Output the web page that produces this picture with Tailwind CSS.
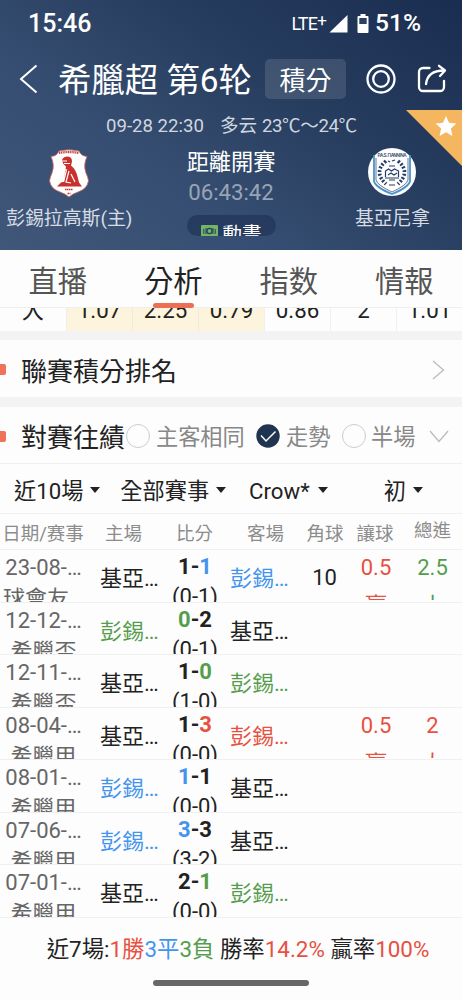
<!DOCTYPE html>
<html lang="zh-Hant">
<head>
    <meta charset="UTF-8">
    <meta name="viewport" content="width=device-width, initial-scale=1.0">
    <title>希臘超 第6轮</title>
    <script src="https://cdn.jsdelivr.net/npm/@tailwindcss/browser@4"></script>
</head>
<body class="w-[462px] h-[1000px] overflow-hidden bg-[#fdfdfd] text-[#222] font-[Roboto,'Noto_Sans_CJK_SC',sans-serif] whitespace-nowrap">
    <!-- Match header -->
    <header class="relative h-[250px] overflow-hidden bg-linear-[35deg,#40577a_0%,#354d70_35%,#263c5e_65%,#192d50_100%] text-white">
        <!-- Status bar -->
        <div class="flex h-[47px] items-center pl-[28px] pr-[41px] leading-none">
            <span class="text-[25px] font-medium">15:46</span>
            <span class="ml-auto text-[18px] tracking-[-0.8px]">LTE<sup class="text-[17px] top-[-4px]">+</sup></span>
            <svg class="ml-[3px]" width="19" height="18" viewBox="0 0 19 18" fill="#fff"><path d="M0.5 17.5L18.5 0v17.5z"/></svg>
            <svg class="ml-[9px]" width="12" height="19" viewBox="0 0 12 19"><path d="M3.5 0h5v2h2a1 1 0 0 1 1 1v15a1 1 0 0 1-1 1h-9a1 1 0 0 1-1-1V3a1 1 0 0 1 1-1h2z" fill="#fff"/><path d="M2.3 4h7.4v6H2.3z" fill="#2b4163"/></svg>
            <span class="ml-[6px] text-[24.5px] font-medium">51%</span>
        </div>
        <!-- Title row -->
        <div class="flex h-[64px] items-center pl-[19px] leading-none">
            <svg width="19" height="30" viewBox="0 0 19 30" fill="none" stroke="#fff" stroke-width="2"><path d="M17.5 1.5L2 15l15.500 13.500"/></svg>
            <h1 class="ml-[20px] w-[207px] pt-[3px] text-[33.4px]">希臘超 第6轮</h1>
            <button class="h-[40px] w-[81px] rounded-[5px] bg-white/12 pt-[3px] text-[26px] leading-none">積分</button>
            <svg class="ml-[20px]" width="30" height="30" viewBox="0 0 30 30" fill="none" stroke="#fff" stroke-width="2.300"><circle cx="15" cy="15" r="13.500"/><circle cx="15" cy="15" r="7.800"/></svg>
            <svg class="ml-[21px]" width="31" height="30" viewBox="0 0 31 30" fill="none" stroke="#fff" stroke-width="2.300" stroke-linecap="round" stroke-linejoin="round"><path d="M12.500 4H6a4 4 0 0 0-4 4v15a4 4 0 0 0 4 4h17a4 4 0 0 0 4-4v-6"/><path d="M9 20C10 11.500 16 6.500 27 6.500M22 1.800l6 4.700-5 5.500"/></svg>
        </div>
        <div class="flex h-[28px] items-center pl-[106px] pt-[2px] text-[18.6px] leading-none text-[#d0d6df]">
            <span class="w-[114px]">09-28 22:30</span>
            <span class="w-[42px]">多云</span>
            <span class="tracking-[-0.4px]">23℃～24℃</span>
        </div>
        <!-- Teams and countdown -->
        <div class="flex h-[98px]">
            <div class="flex w-[186px] flex-col pl-[6px] pt-[10px]">
                <svg class="ml-[43px]" width="40" height="49" viewBox="0 0 40 49">
                    <path d="M10 2Q20-.5 30 2q2 5 8 5.500Q34 16 37 24q2 4 2.500 8Q38 40 29 43q-6 2-9 5-3-3-9-5Q2 40 .5 32 1 28 3 24 6 16 2 7.500 8 7 10 2z" fill="#fff" stroke="#c9625f" stroke-width=".8"/>
                    <path d="M10 4q10-2 20 0" fill="none" stroke="#c34a48" stroke-width="2.400" stroke-dasharray="1.200 .6"/>
                    <path d="M13 12q0-4 5-4.500 5 0 5 5l-1 4q5 4 6.500 11l1.500 6 3 4H8l4-4 3-1 1-9 1-6q-3-2-4-5.500z" fill="#c9302c"/>
                    <path d="M14 20l3.500 1-3 12M20 22l-3 11 5 1M22 25l4 8M13 12h5M15 14.500h6" fill="none" stroke="#fff" stroke-width="1.200"/>
                    <path d="M16 40.500h8M18.500 44.500h3" stroke="#c9302c" stroke-width="1.600" stroke-dasharray="1.500 .5"/>
                </svg>
                <span class="mt-[12px] text-[18.9px] leading-none text-[#d7dce4]">彭錫拉高斯(主)</span>
            </div>
            <div class="flex w-[90px] flex-col items-center pt-[12px] leading-none">
                <span class="text-[22.200px]">距離開賽</span>
                <span class="mt-[8px] text-[22.200px] text-[#99a4b5]">06:43:42</span>
                <div class="mt-[12px] flex h-[21px] w-[89px] overflow-hidden rounded-[11px] bg-[#22365a]/75 pl-[14px]">
                    <svg class="mt-[10px] shrink-0" width="17" height="11" viewBox="0 0 17 11"><rect width="17" height="12" rx="1" fill="#72b566"/><circle cx="8.500" cy="6" r="2.600" fill="none" stroke="#28405f" stroke-width="1.400"/><path d="M2.800 4v5M14.200 4v5M5 3v6M12 3v6" stroke="#28405f"/></svg>
                    <span class="ml-[5px] mt-[10px] text-[19.500px] leading-none">動畫</span>
                </div>
            </div>
            <div class="flex grow flex-col items-center pt-[9px] pl-[47px]">
                <svg class="mr-[1px]" width="48" height="48" viewBox="0 0 48 48">
                    <circle cx="24" cy="24" r="24" fill="#fdfdfd"/>
                    <path d="M6 7v26q1 6 18 13 17-7 18-13V7" fill="none" stroke="#4c93c7" stroke-width="1.800"/>
                    <path d="M8 10v22q1 5 16 12 15-7 16-12V10" fill="none" stroke="#243c68" stroke-width=".7"/>
                    <text x="24" y="9" text-anchor="middle" font-size="5" font-weight="500" fill="#33486f" textLength="29">P.A.S. ΓIANNINA</text>
                    <path d="M18 13Q5 24 18 36M30 13q13 11 0 23" fill="none" stroke="#243c68" stroke-width="3.600" stroke-dasharray="2 1.700"/>
                    <path d="M20 13l2 1M24 13l3-1M21 18h6M17.500 29v-6l3-2 3 2 3-2 4 2v6M17 30h14M20 27l3-2 3 2 3-2M21 32h6M21 37h6" fill="none" stroke="#243c68" stroke-width="1.200"/>
                </svg>
                <span class="mt-[14px] text-[18.8px] leading-none text-[#d7dce4]">基亞尼拿</span>
            </div>
        </div>
        <!-- Favourite corner -->
        <svg class="absolute top-[110px] right-0" width="56" height="56" viewBox="0 0 56 56"><path d="M0 0h56v56z" fill="#f4b65f"/><path d="M40 6l3 6.800 7.400.8-5.500 5 1.500 7.300L40 22.200 33.600 25.900l1.500-7.300-5.500-5 7.400-.8z" fill="#fff"/></svg>
    </header>

    <!-- Tabs -->
    <nav class="relative z-10 grid h-[58px] grid-cols-4 border-b border-[#eee] bg-[#fdfdfd] text-center text-[29.300px] leading-[65px] text-[#555]">
        <span>直播</span>
        <span class="relative text-[#222]">分析<i class="absolute top-[53px] left-[37px] h-[5px] w-[41px] rounded-full bg-[#ea6f54]"></i></span>
        <span>指数</span>
        <span>情報</span>
    </nav>

    <!-- Odds row, scrolled under the tabs -->
    <div class="grid h-[23px] grid-cols-7 overflow-hidden text-center text-[22.300px] leading-[5px]">
        <span>大</span>
        <span class="h-full border-l border-[#f0eee6] bg-[#fdf4dd]">1.07</span>
        <span class="h-full border-l border-[#efeadd] bg-[#fdf4dd]">2.25</span>
        <span class="h-full border-l border-[#efeadd] bg-[#fdf4dd]">0.79</span>
        <span class="h-full border-l border-[#f0f0f0]">0.86</span>
        <span class="h-full border-l border-[#f0f0f0]">2</span>
        <span class="h-full border-l border-[#f0f0f0]">1.01</span>
    </div>

    <section class="flex h-[66px] items-center border-t-[9px] border-[#f3f3f3] pt-[2px]">
        <i class="h-[11px] w-[6px] rounded-r-[2px] bg-[#ee7358]"></i>
        <h2 class="ml-[15px] pt-[4px] text-[26px] leading-none">聯賽積分排名</h2>
        <svg class="ml-auto mr-[17px]" width="13" height="20" viewBox="0 0 13 20" fill="none" stroke="#bbb" stroke-width="1.300"><path d="M1 1l10.500 9L1 19"/></svg>
    </section>

    <section class="flex h-[67px] items-center border-t-[10px] border-b border-t-[#f3f3f3] border-b-[#f0f0f0] pt-[2px] text-[22.200px] leading-none text-[#888]">
        <i class="h-[11px] w-[6px] rounded-r-[2px] bg-[#ee7358]"></i>
        <h2 class="ml-[15px] w-[105px] pt-[3px] text-[26px] leading-none text-[#222]">對賽往績</h2>
        <i class="h-[24px] w-[24px] shrink-0 rounded-full border border-[#ccc]"></i>
        <span class="ml-[6px] w-[100px] pt-[3px]">主客相同</span>
        <svg class="shrink-0" width="24" height="24" viewBox="0 0 24 24"><circle cx="12" cy="12" r="11.700" fill="#1f3450"/><path d="M5 11.500l5 5.500 9.500-9.500" fill="none" stroke="#fff" stroke-width="1.500"/></svg>
        <span class="ml-[6px] w-[56px] pt-[3px]">走勢</span>
        <i class="h-[24px] w-[24px] shrink-0 rounded-full border border-[#ccc]"></i>
        <span class="ml-[5px] w-[58px] pt-[3px]">半場</span>
        <svg class="shrink-0" width="20" height="13" viewBox="0 0 20 13" fill="none" stroke="#bbb" stroke-width="1.300"><path d="M1 1l9 10.500L19 1"/></svg>
    </section>

    <!-- Filters -->
    <div class="flex h-[50px] items-center border-b border-[#f0f0f0] pl-[14px] pt-[3px] text-[22.200px] leading-none">
        <span class="pt-[2px]">近10場</span>
        <svg class="ml-[7px]" width="10" height="6" viewBox="0 0 10 6"><path d="M0 0h10L5 6z" fill="#222"/></svg>
        <span class="ml-[20px] pt-[2px]">全部賽事</span>
        <svg class="ml-[7px]" width="10" height="6" viewBox="0 0 10 6"><path d="M0 0h10L5 6z" fill="#222"/></svg>
        <span class="ml-[23px] pt-[2px]">Crow*</span>
        <svg class="ml-[8px]" width="10" height="6" viewBox="0 0 10 6"><path d="M0 0h10L5 6z" fill="#222"/></svg>
        <span class="ml-[56px] pt-[2px]">初</span>
        <svg class="ml-[7px]" width="10" height="6" viewBox="0 0 10 6"><path d="M0 0h10L5 6z" fill="#222"/></svg>
    </div>

    <!-- Head to head table -->
    <div class="grid h-[36px] grid-cols-[86px_75px_67px_75px_44px_56px_59px] border-b border-[#f0f0f0] text-center text-[18.500px] leading-[40px] text-[#8c8c8c]">
        <span>日期/赛事</span>
        <span>主場</span>
        <span>比分</span>
        <span>客場</span>
        <span>角球</span>
        <span>讓球</span>
        <span class="leading-[34px]">總進</span>
    </div>
    <div id="matches"></div>

    <!-- Summary -->
    <footer class="flex flex-col items-center">
        <p class="mt-[19px] pl-[14px] text-[22.400px] leading-[24px]">近7場:<span class="text-[#e8503f]">1勝</span><span class="text-[#4394ee]">3平</span><span class="text-[#559d4c]">3負</span> 勝率<span class="text-[#e8503f]">14.2%</span> 贏率<span class="text-[#e8503f]">100%</span></p>
        <i class="mt-[19px] h-[6px] w-[156px] rounded-full bg-[#686868]"></i>
    </footer>

    <script>
        const colors = {
            k: 'text-[#222]',
            r: 'text-[#e8503f]',
            g: 'text-[#559d4c]',
            b: 'text-[#4394ee]'
        };

        // date, league, home, home colour, score, half time, away, away colour, corners, handicap, total
        const matches = [
            ['23-08-…', '球會友', '基亞…', 'k', [1, 1], '(0-1)', '彭錫…', 'b', '10', ['0.5', '贏', 'r'], ['2.5', '小', 'g']],
            ['12-12-…', '希臘盃', '彭錫…', 'g', [0, 2], '(0-1)', '基亞…', 'k', '', null, null],
            ['12-11-…', '希臘盃', '基亞…', 'k', [1, 0], '(1-0)', '彭錫…', 'g', '', null, null],
            ['08-04-…', '希臘甲', '基亞…', 'k', [1, 3], '(0-0)', '彭錫…', 'r', '', ['0.5', '贏', 'r'], ['2', '大', 'r']],
            ['08-01-…', '希臘甲', '彭錫…', 'b', [1, 1], '(0-0)', '基亞…', 'k', '', null, null],
            ['07-06-…', '希臘甲', '彭錫…', 'b', [3, 3], '(3-2)', '基亞…', 'k', '', null, null],
            ['07-01-…', '希臘甲', '基亞…', 'k', [2, 1], '(0-0)', '彭錫…', 'g', '', null, null]
        ];

        const odds = (o) => o
            ? `<div class="h-[50px] overflow-hidden ${colors[o[2]]}"><p class="leading-[36px]">${o[0]}</p><p class="leading-[40px]">${o[1]}</p></div>`
            : '<div></div>';

        document.getElementById('matches').innerHTML = matches.map((m, i) => `
            <div class="grid h-[52.500px] grid-cols-[87px_75px_66px_72px_49px_54px_59px] overflow-hidden border-b border-[#f0f0f0] text-center text-[22px]">
                <div class="pt-[2px] leading-[31px] text-[#666]">${m[0]}<br><span class="${i === 0 ? 'mr-[15px]' : 'mr-[0px]'}">${m[1]}</span></div>
                <div class="pl-[13px] text-left leading-[57px] ${colors[m[3]]}">${m[2]}</div>
                <div class="pt-[2px] leading-[30px]"><b><span class="${colors[m[3]]}">${m[4][0]}</span>-<span class="${colors[m[7]]}">${m[4][1]}</span></b><br>${m[5]}</div>
                <div class="pl-[2px] text-left leading-[57px] ${colors[m[7]]}">${m[6]}</div>
                <div class="leading-[55px]">${m[8]}</div>
                ${odds(m[9])}
                ${odds(m[10])}
            </div>`).join('');
    </script>
</body>
</html>
